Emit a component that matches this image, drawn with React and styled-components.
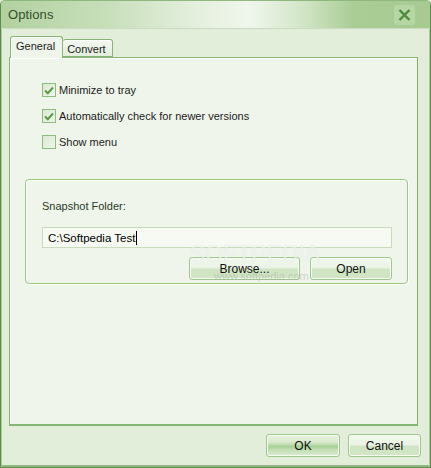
import React from "react";
import styled, { createGlobalStyle } from "styled-components";

const Global = createGlobalStyle`
  html, body { margin: 0; padding: 0; background: #e2edda; }
  body { font-family: "Liberation Sans", Arial, sans-serif; font-size: 11px; color: #1c1c1c; }
  * { box-sizing: border-box; }
`;

const Window = styled.div`
  position: relative;
  width: 431px;
  height: 468px;
  display: flex;
  flex-direction: column;
  background: #e2edda;
  border: 1px solid #5e8c4f;
  border-top-color: #8fb87e;
  border-radius: 5px 5px 0 0;
  box-shadow: inset 1px 0 0 #a9cb98, inset -1px 0 0 #a9cb98, inset 0 -2px 0 #8fb87e;
  overflow: hidden;
`;

const TitleBar = styled.div`
  height: 28px;
  flex: none;
  display: flex;
  align-items: center;
  justify-content: space-between;
  padding: 0 15px 0 7px;
  background: linear-gradient(90deg, #b2d19f 0%, #c7dfba 25%, #e4efdd 45%, #f0f6ec 58%, #d3e6c8 70%, #aacd96 82%, #a6ca92 100%);
  border-bottom: 1px solid #c9dcbf;
`;

const Title = styled.span`
  font-size: 13px;
  color: #33502c;
  letter-spacing: 0.1px;
`;

const CloseBtn = styled.div`
  width: 21px;
  height: 20px;
  display: flex;
  align-items: center;
  justify-content: center;
  background: #b6d6a4;
  border-radius: 2px;
`;

const Body = styled.div`
  flex: 1;
  display: flex;
  flex-direction: column;
  padding: 7px 12px 10px 8px;
`;

const Tabs = styled.div`
  display: flex;
  align-items: flex-end;
  height: 21px;
  padding-left: 1px;
  position: relative;
  z-index: 1;
`;

const Tab = styled.div`
  height: ${p => (p.$active ? "22px" : "18px")};
  margin-bottom: ${p => (p.$active ? "-1px" : "0")};
  padding: ${p => (p.$active ? "3px 7px 0 5px" : "3px 6px 0 4px")};
  font-size: 11px;
  color: #1c1c1c;
  background: ${p => (p.$active ? "#eff5eb" : "linear-gradient(#f4f8f1, #e3eedc)")};
  border: 1px solid #86b474;
  border-bottom: ${p => (p.$active ? "none" : "1px solid #86b474")};
  border-left: ${p => (p.$active ? "1px solid #86b474" : "none")};
  border-radius: 3px 3px 0 0;
  box-shadow: ${p => (p.$active ? "inset 1px 1px 0 #ffffff" : "inset 0 1px 0 #ffffff")};
`;

const Panel = styled.div`
  flex: 1;
  background: #eff5eb;
  border: 1px solid #86b474;
  border-right-color: #7fae6d;
  border-bottom: 2px solid #86b474;
  box-shadow: inset 1px 1px 0 #ffffff;
  padding: 25px 10px 0 15px;
  display: flex;
  flex-direction: column;
`;

const CheckList = styled.div`
  display: flex;
  flex-direction: column;
  gap: 12px;
  padding-left: 17px;
`;

const CheckRow = styled.label`
  display: flex;
  align-items: center;
  gap: 3px;
  height: 14px;
  font-size: 11px;
`;

const Box = styled.span`
  width: 14px;
  height: 14px;
  flex: none;
  display: flex;
  align-items: center;
  justify-content: center;
  border: 1px solid #8dbd7c;
  background: linear-gradient(135deg, #dce9d4, #eef5ea);
`;

const Group = styled.div`
  margin-top: 30px;
  width: 383px;
  height: 105px;
  border: 1px solid #9cc58b;
  border-radius: 4px;
  box-shadow: inset 1px 1px 0 #ffffff, 1px 1px 0 #ffffff;
  padding: 19px 15px 0 16px;
  display: flex;
  flex-direction: column;
`;

const Label = styled.div`
  font-size: 11px;
  color: #2b3a28;
  height: 14px;
  line-height: 14px;
`;

const Input = styled.div`
  margin-top: 14px;
  height: 21px;
  background: #f6faf3;
  border: 1px solid #c7dcbb;
  display: flex;
  align-items: center;
  padding-left: 5px;
  font-size: 11.5px;
  color: #000;
`;

const Caret = styled.span`
  display: inline-block;
  width: 1px;
  height: 14px;
  background: #000;
  margin-left: 1px;
`;

const ButtonRow = styled.div`
  margin-top: 9px;
  display: flex;
  justify-content: flex-end;
  gap: 10px;
`;

const Button = styled.div`
  width: ${p => p.$w}px;
  height: 23px;
  display: flex;
  align-items: center;
  justify-content: center;
  font-size: 12px;
  color: #111;
  border: 1px solid #9ec98d;
  border-radius: 3px;
  box-shadow: inset 0 0 0 1px #f7fbf4;
  background: ${p =>
    p.$default
      ? "linear-gradient(#e8f2e1 0%, #d7e9cc 35%, #a9d096 55%, #c2dfb3 70%, #ddecd4 100%)"
      : "linear-gradient(#f2f8ee 0%, #eaf3e5 48%, #cfe4c3 52%, #d2e6c6 100%)"};
`;

const Footer = styled.div`
  display: flex;
  justify-content: flex-end;
  gap: 8px;
  padding-top: 8px;
  margin-right: -3px;
`;

const Watermark = styled.div`
  position: absolute;
  left: 189px;
  top: 240px;
  font-family: "Liberation Sans", Arial, sans-serif;
  font-size: 23px;
  letter-spacing: 0;
  color: rgba(255, 255, 255, 0.6);
  text-shadow: 0 0 1px rgba(160, 175, 155, 0.3);
  pointer-events: none;
  z-index: 2;
`;

const WatermarkUrl = styled.div`
  position: absolute;
  left: 213px;
  top: 269px;
  font-size: 11px;
  color: rgba(150, 160, 145, 0.4);
  pointer-events: none;
  z-index: 2;
`;

const Check = () => (
  <svg width="10" height="9" viewBox="0 0 10 9">
    <path d="M1 4.5 L3.8 7.2 L9 1.5" fill="none" stroke="#5a9a47" strokeWidth="2" />
  </svg>
);

export default function App() {
  return (
    <>
      <Global />
      <Window>
        <TitleBar>
          <Title>Options</Title>
          <CloseBtn>
            <svg width="13" height="12" viewBox="0 0 13 12">
              <path d="M1.5 1 L11.5 11 M11.5 1 L1.5 11" stroke="#4c8a3b" strokeWidth="2.4" />
            </svg>
          </CloseBtn>
        </TitleBar>
        <Body>
          <Tabs>
            <Tab $active>General</Tab>
            <Tab>Convert</Tab>
          </Tabs>
          <Panel>
            <CheckList>
              <CheckRow><Box><Check /></Box>Minimize to tray</CheckRow>
              <CheckRow><Box><Check /></Box>Automatically check for newer versions</CheckRow>
              <CheckRow><Box />Show menu</CheckRow>
            </CheckList>
            <Group>
              <Label>Snapshot Folder:</Label>
              <Input>C:\Softpedia Test<Caret /></Input>
              <ButtonRow>
                <Button $w={111}>Browse...</Button>
                <Button $w={82}>Open</Button>
              </ButtonRow>
            </Group>
          </Panel>
          <Footer>
            <Button $w={74} $default>OK</Button>
            <Button $w={73}>Cancel</Button>
          </Footer>
        </Body>
        <Watermark>SOFTPEDIA</Watermark>
        <WatermarkUrl>www.softpedia.com</WatermarkUrl>
      </Window>
    </>
  );
}
